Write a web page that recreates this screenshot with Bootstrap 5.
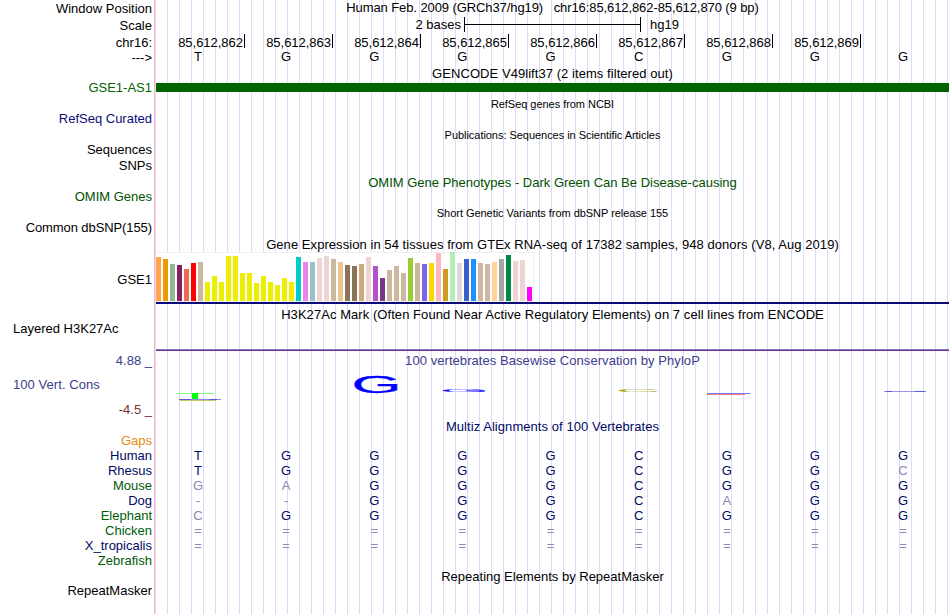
<!DOCTYPE html>
<html lang="en">
<head>
  <meta charset="UTF-8" />
  <meta name="viewport" content="width=device-width, initial-scale=1.0"/>
  <title>Human chr16:85,612,862-85,612,870</title>
  <link href="https://cdn.jsdelivr.net/npm/bootstrap@5.3.3/dist/css/bootstrap.min.css" rel="stylesheet">
  <style>
    body {
      font: 13px/15px "Liberation Sans", Arial, sans-serif;
      color: #000;
      background: #fff;
    }

    /* label column, pink divider, then a guide line every 12px */
    .browser {
      width: 950px;
      height: 614px;
      background:
        linear-gradient(#fff, #fff) 0 0 / 154px 100% no-repeat,
        linear-gradient(#ffb4b4, #ffb4b4) 154px 0 / 1px 100% no-repeat,
        repeating-linear-gradient(90deg, transparent 0 11px, #dcdcfa 11px 12px);
    }

    .side { width: 156px; padding-right: 4px; flex: none; white-space: nowrap; }
    .side-start { padding-left: 13px; }
    .data { width: 793px; flex: none; white-space: nowrap; }
    .minor { font-size: 11px; padding-top: 1px; letter-spacing: -.04px; }
    .loose { letter-spacing: .06px; }
    .tight { letter-spacing: -.09px; }
    .down1 { padding-top: 1px; }
    .down3 { padding-top: 3px; }

    .h14 { height: 14px; }
    .h15 { height: 15px; }
    .h16 { height: 16px; }
    .h17 { height: 17px; }

    .c-refseq { color: #0c0c78; }
    .c-gene { color: #006400; }
    .c-omim { color: #005000; }
    .c-cons { color: #3c3c8c; }
    .c-low { color: #783232; }
    .c-gaps { color: #e68c14; }
    .c-navy { color: #000a64; }
    .c-green { color: #005a0a; }
    .c-miss { color: #8a8ab6; }

    .scale-text { width: 305px; }
    .scale-bar {
      width: 177px;
      height: 15px;
      margin-left: 3px;
      margin-right: 9px;
      border: solid #000;
      border-width: 0 1px;
      background: linear-gradient(#000, #000) 0 7px / 100% 1px no-repeat;
    }

    .coords { padding-left: 1px; }
    .coord { width: 88px; height: 14px; padding-right: 1px; border-right: 1px solid #000; }
    .coord-text { padding-top: 1px; letter-spacing: -.02px; }

    .bases { display: grid; grid-template-columns: repeat(9, 1fr); text-align: center; }
    .bases span { padding-right: 4px; }

    .gene-bar { height: 9px; margin-top: 3px; background: #006400; }

    .gtex-row { height: 52px; }
    .gtex-label { padding-top: 20px; }
    .gtex-line { border-bottom: 2px solid #0c0c78; }
    .gtex-plot {
      width: 378px;
      height: 50px;
      gap: 2px;
      background: #fff;
      border: solid #f0f0f0;
      border-width: 1px 1px 1px 0;
    }
    .gtex-plot div { width: 5px; flex: none; }

    .marks-row { height: 32px; }
    .marks-line { height: 2px; margin-top: 28px; background: linear-gradient(#7878c8 50%, #823278 50%); }

    .cons-row { height: 66px; }
    .cons-top { margin-bottom: 9px; }
    .cons-mid { margin-bottom: 10px; }
  </style>
</head>
<body>
  <div class="browser d-flex flex-column overflow-hidden">
    <div class="d-flex h17">
      <div class="side text-end down1">Window Position</div>
      <div class="data text-center tight">Human Feb. 2009 (GRCh37/hg19) &nbsp; chr16:85,612,862-85,612,870 (9 bp)</div>
    </div>
    <div class="d-flex h17">
      <div class="side text-end down1">Scale</div>
      <div class="data d-flex">
        <div class="scale-text text-end">2 bases</div>
        <div class="scale-bar"></div>
        <div>hg19</div>
      </div>
    </div>
    <div class="d-flex h15">
      <div class="side text-end down1">chr16:</div>
      <div class="data d-flex coords" id="coords"></div>
    </div>
    <div class="d-flex h17">
      <div class="side text-end down1">---&gt;</div>
      <div class="data bases" data-seq="TGGGGCGGG"></div>
    </div>

    <div class="d-flex h14">
      <div class="side"></div>
      <div class="data text-center loose">GENCODE V49lift37 (2 items filtered out)</div>
    </div>
    <div class="d-flex h16">
      <div class="side text-end c-gene">GSE1-AS1</div>
      <div class="data"><div class="gene-bar"></div></div>
    </div>

    <div class="d-flex h15">
      <div class="side"></div>
      <div class="data text-center minor">RefSeq genes from NCBI</div>
    </div>
    <div class="d-flex h16">
      <div class="side text-end c-refseq">RefSeq Curated</div>
    </div>

    <div class="d-flex h15">
      <div class="side"></div>
      <div class="data text-center minor">Publications: Sequences in Scientific Articles</div>
    </div>
    <div class="d-flex h16">
      <div class="side text-end">Sequences</div>
    </div>
    <div class="d-flex h17">
      <div class="side text-end">SNPs</div>
    </div>

    <div class="d-flex h14">
      <div class="side"></div>
      <div class="data text-center c-omim">OMIM Gene Phenotypes - Dark Green Can Be Disease-causing</div>
    </div>
    <div class="d-flex h16">
      <div class="side text-end c-omim">OMIM Genes</div>
    </div>

    <div class="d-flex h15">
      <div class="side"></div>
      <div class="data text-center minor">Short Genetic Variants from dbSNP release 155</div>
    </div>
    <div class="d-flex h17">
      <div class="side text-end tight">Common dbSNP(155)</div>
    </div>

    <div class="d-flex h15">
      <div class="side"></div>
      <div class="data text-center loose">Gene Expression in 54 tissues from GTEx RNA-seq of 17382 samples, 948 donors (V8, Aug 2019)</div>
    </div>
    <div class="d-flex gtex-row">
      <div class="side text-end gtex-label">GSE1</div>
      <div class="data gtex-line">
        <div class="gtex-plot d-flex align-items-end" id="gtex"></div>
      </div>
    </div>

    <div class="d-flex h17">
      <div class="side"></div>
      <div class="data text-center down3 loose">H3K27Ac Mark (Often Found Near Active Regulatory Elements) on 7 cell lines from ENCODE</div>
    </div>
    <div class="d-flex marks-row">
      <div class="side side-start">Layered H3K27Ac</div>
      <div class="data"><div class="marks-line"></div></div>
    </div>

    <div class="d-flex cons-row">
      <div class="side c-cons side-start">
        <div class="text-end cons-top">4.88 _</div>
        <div class="cons-mid loose">100 Vert. Cons</div>
        <div class="text-end c-low">-4.5 _</div>
      </div>
      <div class="data c-cons text-center">
        <div class="loose">100 vertebrates Basewise Conservation by PhyloP</div>
        <!-- sequence logo: letter height is the score, negative scores hang below -->
        <svg class="d-block" width="793" height="46" viewBox="156 368 793 46" font-family="Liberation Sans, Arial, sans-serif" font-size="13">
          <path d="M176 393.5H214" stroke="#7dff7d"/>
          <path d="M192 393H198V399H192Z" fill="#00ff00"/>
          <path d="M179 399.5H221" stroke="#8c8cf0"/>
          <path d="M179 399.5H191M209 399.5H217" stroke="#5a5ac8"/>
          <path d="M180 400.5H216" stroke="#c8c864"/>
          <text transform="translate(351.6 392.5) scale(4.95 1.8)" fill="#0000ff" stroke="#0000ff" stroke-width=".15">G</text>
          <text transform="translate(439.6 391.7) scale(4.95 .28)" fill="#0000ff">G</text>
          <text transform="translate(615.8 391.7) scale(4.75 .28)" fill="#a0a000">C</text>
          <path d="M707 393.5H750" stroke="#7d7df5"/>
          <path d="M707 394.5H745" stroke="#ff7878"/>
          <path d="M884 391.5H926" stroke="#9696f0"/>
          <path d="M886 391.5H892M915 391.5H925" stroke="#5a5ae6"/>
        </svg>
      </div>
    </div>

    <div class="d-flex h14">
      <div class="side"></div>
      <div class="data text-center c-navy loose">Multiz Alignments of 100 Vertebrates</div>
    </div>
    <div class="d-flex h15">
      <div class="side text-end c-gaps">Gaps</div>
    </div>
    <div id="species"></div>

    <div class="d-flex h15 down1">
      <div class="side"></div>
      <div class="data text-center">Repeating Elements by RepeatMasker</div>
    </div>
    <div class="d-flex h15">
      <div class="side text-end">RepeatMasker</div>
    </div>
  </div>

  <script src="https://cdn.jsdelivr.net/npm/bootstrap@5.3.3/dist/js/bootstrap.bundle.min.js"></script>
  <script>
    // lower case marks a base that differs from human
    const species = [
      ['Human', 'c-navy', 'TGGGGCGGG'],
      ['Rhesus', 'c-navy', 'TGGGGCGGc'],
      ['Mouse', 'c-green', 'gaGGGCGGG'],
      ['Dog', 'c-navy', '--GGGCaGG'],
      ['Elephant', 'c-green', 'cGGGGCGGG'],
      ['Chicken', 'c-green', '========='],
      ['X_tropicalis', 'c-navy', '========='],
      ['Zebrafish', 'c-green', '']
    ];

    // [height in px, colour] for each tissue
    const tissues = [
      [44, '#ffa54f'], [42, '#ee9a00'], [37, '#8fbc8f'], [36, '#8b1c62'], [32, '#ee6a50'], [38, '#ff0000'], [39, '#cdb79e'],
      [19, '#eeee00'], [25, '#eeee00'], [19, '#eeee00'], [45, '#eeee00'], [45, '#eeee00'], [28, '#eeee00'], [28, '#eeee00'],
      [18, '#eeee00'], [25, '#eeee00'], [19, '#eeee00'], [16, '#eeee00'], [23, '#eeee00'], [19, '#eeee00'],
      [44, '#00cdcd'], [39, '#ee82ee'], [39, '#9ac0cd'], [43, '#eed5d2'], [45, '#eed5d2'], [42, '#cdb79e'], [39, '#eec591'],
      [36, '#8b7355'], [35, '#8b7355'], [37, '#cdaa7d'], [44, '#eed5d2'], [35, '#b452cd'], [23, '#7a378b'], [31, '#cdb79e'],
      [35, '#cdb79e'], [28, '#cdb79e'], [43, '#9acd32'], [38, '#cdb79e'], [37, '#7a67ee'], [38, '#ffd700'], [48, '#ffb6c1'],
      [32, '#cd9b1d'], [49, '#b4eeb4'], [38, '#d9d9d9'], [42, '#3a5fcd'], [42, '#1e90ff'], [38, '#cdb79e'], [37, '#cdb79e'],
      [39, '#ffd39b'], [42, '#a6a6a6'], [46, '#008b45'], [40, '#eed5d2'], [41, '#eed5d2'], [14, '#ff00ff']
    ];

    function bases(seq) {
      return [...seq].map(b => {
        const miss = b !== b.toUpperCase() || b === '-' || b === '=';
        return `<span class="${miss ? 'c-miss' : ''}">${b.toUpperCase()}</span>`;
      }).join('');
    }

    for (let i = 2; i < 10; i++) {
      document.getElementById('coords').innerHTML +=
        `<div class="coord text-end"><div class="coord-text">85,612,86${i}</div></div>`;
    }

    document.querySelectorAll('[data-seq]').forEach(el => {
      el.innerHTML = bases(el.dataset.seq);
    });

    document.getElementById('gtex').innerHTML = tissues.map(([h, color]) =>
      `<div style="height:${h}px;background:${color}"></div>`).join('');

    document.getElementById('species').innerHTML = species.map(([name, color, seq]) => `
      <div class="d-flex h15">
        <div class="side text-end ${color}">${name}</div>
        <div class="data bases c-navy">${bases(seq)}</div>
      </div>`).join('');
  </script>
</body>
</html>
